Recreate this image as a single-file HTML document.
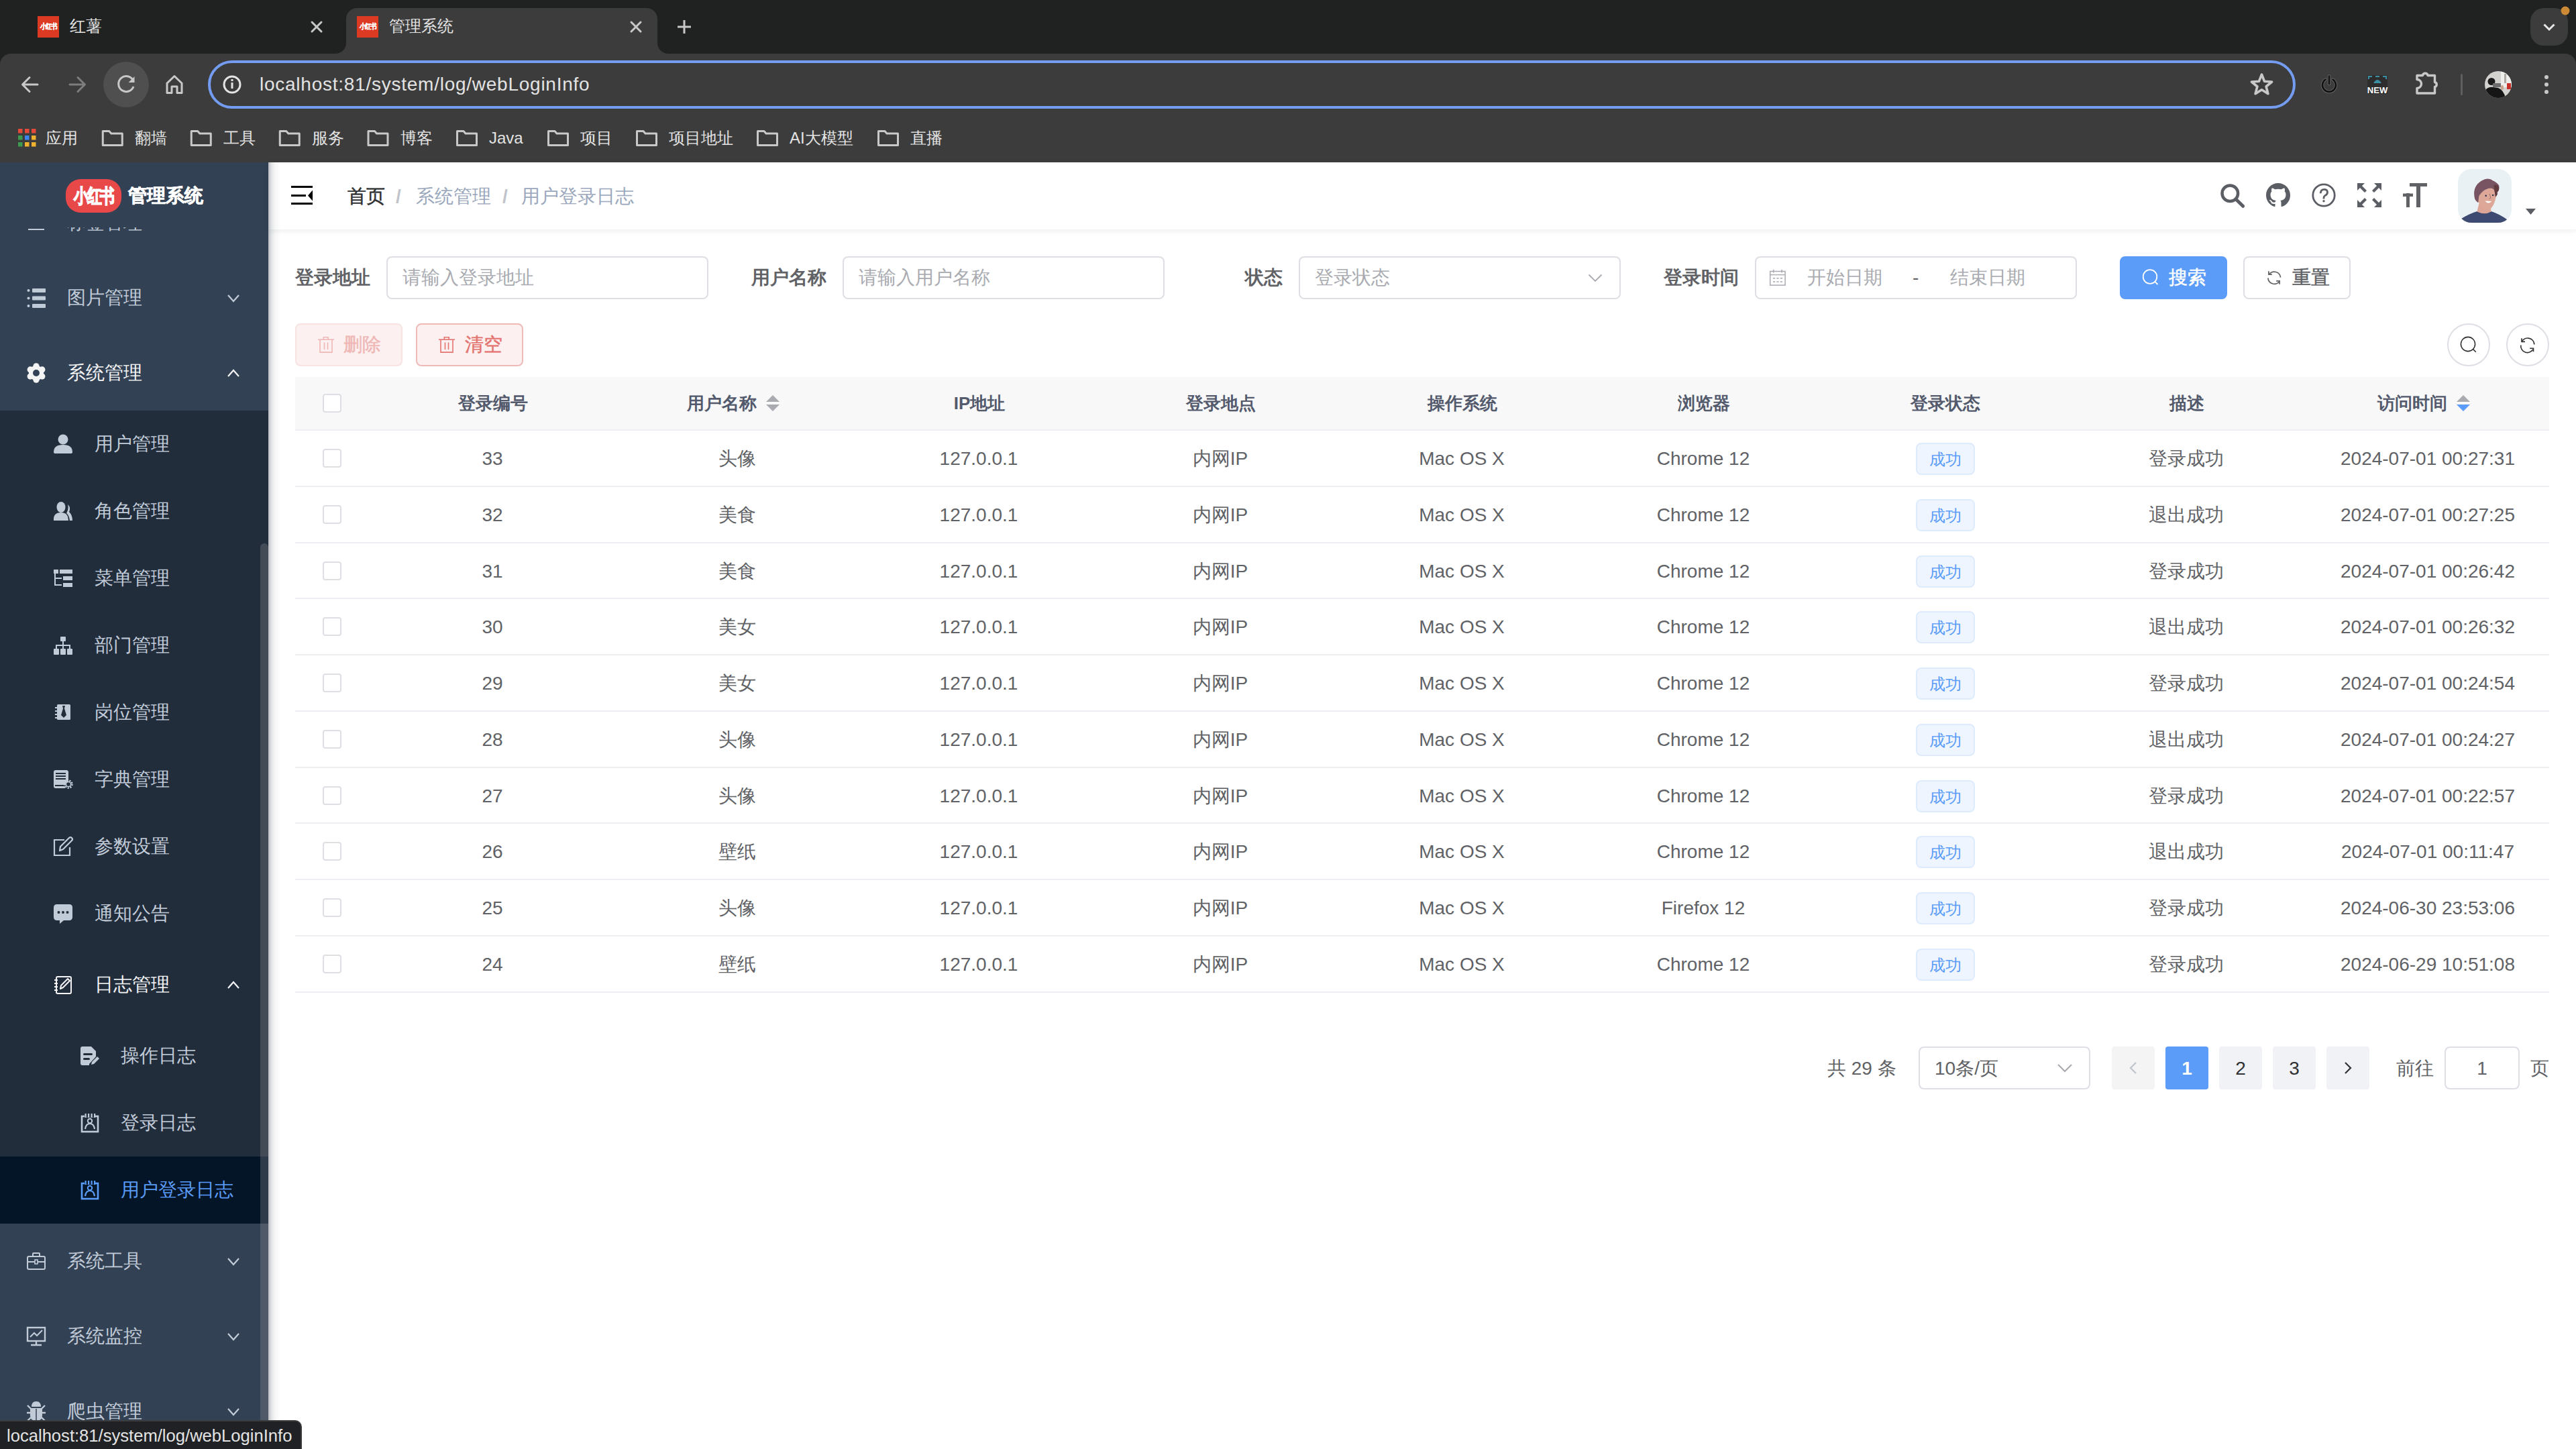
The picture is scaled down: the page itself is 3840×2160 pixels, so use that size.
<!DOCTYPE html><html><head><meta charset="utf-8"><style>
*{box-sizing:border-box}
html,body{margin:0;padding:0}
body{width:3840px;height:2160px;overflow:hidden;position:relative;background:#fff;font-family:"Liberation Sans",sans-serif;}
.a{position:absolute}
svg{display:block}
#tabstrip{left:0;top:0;width:3840px;height:120px;background:#202121}
#toolbar{left:0;top:80px;width:3840px;height:162px;background:#3c3c3c;border-radius:16px 16px 0 0}
.tabt{font-size:24px;color:#e3e3e3;line-height:28px;white-space:nowrap}
.bm{font-size:24px;color:#e3e3e3;line-height:28px;white-space:nowrap;top:192px}
#sidebar{left:0;top:242px;width:400px;height:1918px;background:#334154;overflow:hidden}
.mt{position:absolute;font-size:28px;line-height:32px;color:#c1cbd8;white-space:nowrap}
.lbl{position:absolute;font-size:28px;font-weight:700;color:#606266;line-height:32px;white-space:nowrap}
.inp{position:absolute;height:64px;border:2px solid #dddfe5;border-radius:8px;background:#fff}
.ph{position:absolute;font-size:28px;color:#a9abb1;line-height:32px;white-space:nowrap}
.th{position:absolute;font-size:26px;font-weight:700;color:#535a6c;line-height:32px;white-space:nowrap;text-align:center}
.td{position:absolute;font-size:28px;color:#606266;line-height:32px;white-space:nowrap;text-align:center}
.cb{position:absolute;width:28px;height:28px;border:2px solid #dddfe5;border-radius:4px;background:#fff}
.hl{position:absolute;left:440px;width:3360px;height:2px;background:#eceef4}
</style></head><body>
<div id="tabstrip" class="a"></div><div id="toolbar" class="a"></div>
<svg class="a" style="left:0;top:0" width="3840" height="242">
  <path d="M500 80 A16 16 0 0 0 516 64 L516 28 A16 16 0 0 1 532 12 L964 12 A16 16 0 0 1 980 28 L980 64 A16 16 0 0 0 996 80 Z" fill="#3c3c3c"/>
  <!-- favicons -->
  <rect x="56" y="24" width="32" height="32" fill="#dc3a22"/>
  <rect x="532" y="24" width="32" height="32" fill="#dc3a22"/>
  <!-- close x -->
  <path d="M465 33 L479 47 M479 33 L465 47" stroke="#c8c8c8" stroke-width="3" stroke-linecap="round"/>
  <path d="M941 33 L955 47 M955 33 L941 47" stroke="#c8c8c8" stroke-width="3" stroke-linecap="round"/>
  <!-- plus -->
  <path d="M1020 30 L1020 50 M1010 40 L1030 40" stroke="#c8c8c8" stroke-width="3"/>
  <!-- tab dropdown -->
  <rect x="3772" y="12" width="56" height="56" rx="20" fill="#3c3c3c"/>
  <path d="M3792.5 36.5 L3800 44 L3807.5 36.5" stroke="#e8e8e8" stroke-width="3" fill="none" stroke-linejoin="miter"/>
  <circle cx="3824" cy="16" r="6.5" fill="#cb8a33"/>
  <!-- back / fwd -->
  <path d="M56 126 L34 126 M44 115.5 L33.5 126 L44 136.5" stroke="#c8c8c8" stroke-width="3" fill="none" stroke-linecap="round" stroke-linejoin="round"/>
  <path d="M104 126 L126 126 M116 115.5 L126.5 126 L116 136.5" stroke="#7d7d7d" stroke-width="3" fill="none" stroke-linecap="round" stroke-linejoin="round"/>
  <circle cx="188" cy="126" r="34" fill="#4f4f4f"/>
  <path d="M198.5 120 A11.5 11.5 0 1 0 199 129" stroke="#c8c8c8" stroke-width="3" fill="none"/>
  <path d="M200.5 114 L200.5 123 L191.5 123 Z" fill="#c8c8c8"/>
  <!-- home -->
  <path d="M249 138.5 L249 124 L260 113.5 L271 124 L271 138.5 L264 138.5 L264 129 L256 129 L256 138.5 Z" stroke="#c8c8c8" stroke-width="3" fill="none" stroke-linejoin="round"/>
  <!-- url bar -->
  <rect x="312" y="92" width="3108" height="68" rx="34" fill="#3c3c3c" stroke="#749cf0" stroke-width="4"/>
  <circle cx="346" cy="126" r="12" stroke="#e3e3e3" stroke-width="3" fill="none"/>
  <rect x="344.5" y="123" width="3" height="9" fill="#e3e3e3"/>
  <rect x="344.5" y="118" width="3" height="3" fill="#e3e3e3"/>
  <!-- star -->
  <path d="M3371.5 111 L3375.6 121.3 L3386.6 122 L3378.1 129 L3380.9 139.7 L3371.5 133.8 L3362.1 139.7 L3364.9 129 L3356.4 122 L3367.4 121.3 Z" stroke="#c8c8c8" stroke-width="3.6" fill="none" stroke-linejoin="round"/>
  <!-- power -->
  <path d="M3466.5 118.5 A10 10 0 1 0 3477.5 118.5" stroke="#6a6a6a" stroke-width="4.4" fill="none" stroke-linecap="round"/>
  <path d="M3472 113.5 L3472 125" stroke="#6a6a6a" stroke-width="4.4" stroke-linecap="round"/>
  <path d="M3466.5 118.5 A10 10 0 1 0 3477.5 118.5" stroke="#111" stroke-width="2.6" fill="none" stroke-linecap="round"/>
  <path d="M3472 113.5 L3472 125" stroke="#111" stroke-width="2.6" stroke-linecap="round"/>
  <!-- NEW -->
  <rect x="3529" y="112" width="30" height="28" fill="#2d2d2d"/>
  <path d="M3531 118 L3531 114 L3536 114 M3541 114 L3547 114 M3552 114 L3557 114 L3557 118" stroke="#3a8fa3" stroke-width="2" fill="none"/>
  <path d="M3538 124 Q3544 114 3550 124 Z" fill="#3a8fa3"/>
  <text x="3544" y="139" font-family="Liberation Sans" font-weight="700" font-size="13" fill="#fff" text-anchor="middle">NEW</text>
  <!-- puzzle -->
  <path d="M3603 112.5 L3611.5 112.5 A3.8 3.8 0 0 1 3619 112.5 L3629.5 112.5 L3629.5 122.5 A3.6 3.6 0 0 1 3629.5 129.5 L3629.5 139 L3603 139 L3603 131.5 A6.5 6.5 0 0 0 3603 118.5 Z" stroke="#c8c8c8" stroke-width="3.4" fill="none" stroke-linejoin="round"/>
  <rect x="3668" y="110" width="3" height="32" rx="1.5" fill="#5f5f5f"/>
  <!-- profile -->
  <defs><clipPath id="pf"><circle cx="3724" cy="126" r="20"/></clipPath></defs>
  <g clip-path="url(#pf)">
  <rect x="3704" y="106" width="40" height="40" fill="#d4d2cf"/>
  <rect x="3728" y="106" width="16" height="24" fill="#eeeeec"/>
  <rect x="3733" y="110" width="3" height="14" fill="#b0aaa4"/>
  <path d="M3704 146 L3705 134 Q3710 129 3716 130 L3724 131 Q3732 134 3735 146 Z" fill="#151515"/>
  <circle cx="3714" cy="121.5" r="5.5" fill="#1b1b1b"/>
  <rect x="3716" y="124" width="12" height="6" rx="1" fill="#6e6e6e"/>
  <rect x="3728" y="127" width="4" height="7" rx="2" fill="#c9a58e"/>
  <rect x="3737" y="124" width="6" height="9" fill="#c8302a"/>
  </g>
  <!-- kebab -->
  <circle cx="3796" cy="115" r="3" fill="#c8c8c8"/>
  <circle cx="3796" cy="126" r="3" fill="#c8c8c8"/>
  <circle cx="3796" cy="137" r="3" fill="#c8c8c8"/>
  <!-- apps grid -->
  <g>
    <rect x="27" y="192" width="6.5" height="6.5" fill="#e5493a"/><rect x="37" y="192" width="6.5" height="6.5" fill="#e5493a"/><rect x="47" y="192" width="6.5" height="6.5" fill="#e5493a"/>
    <rect x="27" y="202" width="6.5" height="6.5" fill="#3c9b4f"/><rect x="37" y="202" width="6.5" height="6.5" fill="#3d85f0"/><rect x="47" y="202" width="6.5" height="6.5" fill="#f0b22e"/>
    <rect x="27" y="212" width="6.5" height="6.5" fill="#3c9b4f"/><rect x="37" y="212" width="6.5" height="6.5" fill="#f0b22e"/><rect x="47" y="212" width="6.5" height="6.5" fill="#f0b22e"/>
  </g>
</svg>
<div class="a tabt" style="left:56px;top:30px;font-size:10px;font-weight:700;color:#fff;width:32px;text-align:center;line-height:20px;letter-spacing:-1px;transform:scale(0.92,1.05);-webkit-text-stroke:0.3px #fff">小红书</div>
<div class="a tabt" style="left:532px;top:30px;font-size:10px;font-weight:700;color:#fff;width:32px;text-align:center;line-height:20px;letter-spacing:-1px;transform:scale(0.92,1.05);-webkit-text-stroke:0.3px #fff">小红书</div>
<div class="a tabt" style="left:104px;top:25px">红薯</div>
<div class="a tabt" style="left:580px;top:25px">管理系统</div>
<div class="a" style="left:387px;top:110px;font-size:28px;line-height:32px;color:#e3e3e3;letter-spacing:0.75px;white-space:nowrap">localhost:81/system/log/webLoginInfo</div>
<div class="a bm" style="left:68px">应用</div>
<svg class="a" style="left:0;top:0" width="1400" height="242"><path d="M153.25 216.5 L153.25 195.5 L162.75 195.5 L165.75 199 L182.25 199 L182.25 216.5 Z" stroke="#c8c8c8" stroke-width="3" fill="none" stroke-linejoin="round"/><path d="M285.25 216.5 L285.25 195.5 L294.75 195.5 L297.75 199 L314.25 199 L314.25 216.5 Z" stroke="#c8c8c8" stroke-width="3" fill="none" stroke-linejoin="round"/><path d="M417.25 216.5 L417.25 195.5 L426.75 195.5 L429.75 199 L446.25 199 L446.25 216.5 Z" stroke="#c8c8c8" stroke-width="3" fill="none" stroke-linejoin="round"/><path d="M549.0 216.5 L549.0 195.5 L558.5 195.5 L561.5 199 L578.0 199 L578.0 216.5 Z" stroke="#c8c8c8" stroke-width="3" fill="none" stroke-linejoin="round"/><path d="M681.5 216.5 L681.5 195.5 L691 195.5 L694 199 L710.5 199 L710.5 216.5 Z" stroke="#c8c8c8" stroke-width="3" fill="none" stroke-linejoin="round"/><path d="M817.5 216.5 L817.5 195.5 L827 195.5 L830 199 L846.5 199 L846.5 216.5 Z" stroke="#c8c8c8" stroke-width="3" fill="none" stroke-linejoin="round"/><path d="M949.5 216.5 L949.5 195.5 L959 195.5 L962 199 L978.5 199 L978.5 216.5 Z" stroke="#c8c8c8" stroke-width="3" fill="none" stroke-linejoin="round"/><path d="M1129.5 216.5 L1129.5 195.5 L1139 195.5 L1142 199 L1158.5 199 L1158.5 216.5 Z" stroke="#c8c8c8" stroke-width="3" fill="none" stroke-linejoin="round"/><path d="M1309.5 216.5 L1309.5 195.5 L1319 195.5 L1322 199 L1338.5 199 L1338.5 216.5 Z" stroke="#c8c8c8" stroke-width="3" fill="none" stroke-linejoin="round"/></svg><div class="a bm" style="left:200.75px">翻墙</div>
<div class="a bm" style="left:332.75px">工具</div>
<div class="a bm" style="left:464.75px">服务</div>
<div class="a bm" style="left:596.5px">博客</div>
<div class="a bm" style="left:729px">Java</div>
<div class="a bm" style="left:865px">项目</div>
<div class="a bm" style="left:997px">项目地址</div>
<div class="a bm" style="left:1177px">AI大模型</div>
<div class="a bm" style="left:1357px">直播</div>


<div id="sidebar" class="a">
<div class="a" style="left:0;top:370px;width:400px;height:1212px;background:#222d3c"></div>
<div class="a" style="left:0;top:1482px;width:400px;height:100px;background:#041527"></div>
<svg class="a" style="left:0;top:0" width="400" height="1918"><g transform="translate(0,-242)"><rect x="42" y="341" width="24" height="2" fill="#c1cbd8"/><rect x="40.5" y="431" width="4" height="4" rx="2" fill="#c1cbd8"/><rect x="48" y="430" width="20" height="6" rx="1" fill="#c1cbd8"/><rect x="40.5" y="442.5" width="4" height="4" rx="2" fill="#c1cbd8"/><rect x="48" y="441.5" width="20" height="6" rx="1" fill="#c1cbd8"/><rect x="40.5" y="454" width="4" height="4" rx="2" fill="#c1cbd8"/><rect x="48" y="453" width="20" height="6" rx="1" fill="#c1cbd8"/><path d="M340 440 L348 449 L356 440" stroke="#c1cbd8" stroke-width="2.2" fill="none"/><circle cx="54.00" cy="545.80" r="4.6" fill="#f4f4f5"/><circle cx="62.83" cy="550.90" r="4.6" fill="#f4f4f5"/><circle cx="62.83" cy="561.10" r="4.6" fill="#f4f4f5"/><circle cx="54.00" cy="566.20" r="4.6" fill="#f4f4f5"/><circle cx="45.17" cy="561.10" r="4.6" fill="#f4f4f5"/><circle cx="45.17" cy="550.90" r="4.6" fill="#f4f4f5"/><circle cx="54" cy="556" r="11" fill="#f4f4f5"/><circle cx="54" cy="556" r="5" fill="#334154"/><path d="M340 561 L348 552 L356 561" stroke="#f4f4f5" stroke-width="2.2" fill="none"/><circle cx="94" cy="655" r="7.5" fill="#c1cbd8"/><path d="M80 674 Q80 663 94 663 Q108 663 108 674 Q108 676 105 676 L83 676 Q80 676 80 674 Z" fill="#c1cbd8"/><ellipse cx="91" cy="756" rx="6.5" ry="8" fill="#c1cbd8"/><path d="M80 776 Q79 764 91 764 Q99 764 101 770 L102 776 Z" fill="#c1cbd8"/><path d="M101 752 Q106 756 103 763 Q108 768 108 776 L104 776 Q103 768 99 765 Q103 759 101 752 Z" fill="#c1cbd8"/><rect x="80" y="849" width="7" height="6" fill="#c1cbd8"/><rect x="89" y="849" width="19" height="6" fill="#c1cbd8"/><rect x="94" y="859" width="14" height="6" fill="#c1cbd8"/><rect x="94" y="869" width="14" height="6" fill="#c1cbd8"/><path d="M82 855 L82 872 L92 872 M82 862 L92 862" stroke="#c1cbd8" stroke-width="2" fill="none"/><rect x="90" y="949" width="8" height="7" rx="1" fill="#c1cbd8"/><path d="M94 956 L94 967 M84 967 L84 962 L104 962 L104 967" stroke="#c1cbd8" stroke-width="2" fill="none"/><rect x="80" y="967" width="8" height="9" rx="1" fill="#c1cbd8"/><rect x="90" y="967" width="8" height="9" rx="1" fill="#c1cbd8"/><rect x="100" y="967" width="8" height="9" rx="1" fill="#c1cbd8"/><rect x="85" y="1050" width="20" height="23" rx="1.5" fill="#c1cbd8"/><path d="M93 1052 L97 1052 L96 1056 L99 1066 L95 1070 L91 1066 L94 1056 Z" fill="#222d3c"/><rect x="82" y="1054" width="5" height="2" fill="#c1cbd8"/><rect x="82" y="1059" width="5" height="2" fill="#c1cbd8"/><rect x="82" y="1064" width="5" height="2" fill="#c1cbd8"/><rect x="82" y="1069" width="5" height="2" fill="#c1cbd8"/><path d="M80 1151 Q80 1148 83 1148 L100 1148 L102 1150 L102 1164 Q96 1168 97 1175 L83 1175 Q80 1175 80 1172 Z" fill="#c1cbd8"/><rect x="83" y="1152" width="15" height="2" fill="#222d3c"/><rect x="83" y="1156" width="15" height="2" fill="#222d3c"/><rect x="83" y="1160" width="15" height="2" fill="#222d3c"/><rect x="82" y="1170" width="15" height="2" fill="#222d3c"/><circle cx="102" cy="1169" r="5.5" stroke="#c1cbd8" stroke-width="2.6" fill="none" stroke-dasharray="2.2 1.6"/><circle cx="102" cy="1169" r="3.6" stroke="#c1cbd8" stroke-width="1.5" fill="none"/><path d="M96 1252 L81 1252 L81 1275 L104 1275 L104 1263" stroke="#c1cbd8" stroke-width="2.2" fill="none"/><path d="M89 1268 L90 1262 L103 1249 Q105 1247 107 1249 Q109 1251 107 1253 L94 1266 Z" stroke="#c1cbd8" stroke-width="2.2" fill="none" stroke-linejoin="round"/><path d="M80 1353 Q80 1348 85 1348 L103 1348 Q108 1348 108 1353 L108 1367 Q108 1372 103 1372 L95 1372 L89 1377 L89 1372 L85 1372 Q80 1372 80 1367 Z" fill="#c1cbd8"/><circle cx="87.5" cy="1360" r="2" fill="#222d3c"/><circle cx="94" cy="1360" r="2" fill="#222d3c"/><circle cx="100.5" cy="1360" r="2" fill="#222d3c"/><path d="M86 1456 L104 1456 Q106 1456 106 1458 L106 1479 Q106 1481 104 1481 L86 1481 Q84 1481 84 1479 L84 1458 Q84 1456 86 1456 Z" stroke="#f4f4f5" stroke-width="2" fill="none"/><rect x="81" y="1460" width="5" height="2" fill="#f4f4f5"/><rect x="81" y="1465" width="5" height="2" fill="#f4f4f5"/><rect x="81" y="1470" width="5" height="2" fill="#f4f4f5"/><rect x="81" y="1475" width="5" height="2" fill="#f4f4f5"/><path d="M90 1474 L91 1469 L101 1459 L104 1462 L94 1472 Z" stroke="#f4f4f5" stroke-width="2" fill="none" stroke-linejoin="round"/><path d="M340 1473 L348 1464 L356 1473" stroke="#f4f4f5" stroke-width="2.2" fill="none"/><path d="M123 1560 L136 1560 L143 1567 L143 1575 L133 1586 L133 1588 L123 1588 Q120 1588 120 1585 L120 1563 Q120 1560 123 1560 Z" fill="#c1cbd8"/><rect x="124" y="1570" width="14" height="3" rx="1.5" fill="#222d3c"/><rect x="124" y="1577" width="10" height="3" rx="1.5" fill="#222d3c"/><path d="M136 1587 L137 1583 L145 1575 L148 1578 L140 1586 Z" fill="#c1cbd8"/><rect x="122" y="1664" width="24" height="23" stroke="#c1cbd8" stroke-width="2.6" fill="none"/><rect x="126" y="1658" width="16" height="7" fill="#222d3c"/><rect x="126.5" y="1660" width="2.2" height="6" fill="#c1cbd8"/><rect x="131" y="1660" width="2.2" height="6" fill="#c1cbd8"/><rect x="135.5" y="1660" width="2.2" height="6" fill="#c1cbd8"/><rect x="140" y="1660" width="2.2" height="6" fill="#c1cbd8"/><circle cx="134" cy="1671" r="3.2" stroke="#c1cbd8" stroke-width="2" fill="none"/><path d="M127 1683 Q128 1675 134 1675 Q140 1675 141 1683" stroke="#c1cbd8" stroke-width="2.2" fill="none"/><rect x="122" y="1764" width="24" height="23" stroke="#5a9cf8" stroke-width="2.6" fill="none"/><rect x="126" y="1758" width="16" height="7" fill="#041527"/><rect x="126.5" y="1760" width="2.2" height="6" fill="#5a9cf8"/><rect x="131" y="1760" width="2.2" height="6" fill="#5a9cf8"/><rect x="135.5" y="1760" width="2.2" height="6" fill="#5a9cf8"/><rect x="140" y="1760" width="2.2" height="6" fill="#5a9cf8"/><circle cx="134" cy="1771" r="3.2" stroke="#5a9cf8" stroke-width="2" fill="none"/><path d="M127 1783 Q128 1775 134 1775 Q140 1775 141 1783" stroke="#5a9cf8" stroke-width="2.2" fill="none"/><rect x="41" y="1873" width="26" height="19" rx="2" stroke="#c1cbd8" stroke-width="2" fill="none"/><path d="M49 1873 L49 1869 Q49 1868 50 1868 L58 1868 Q59 1868 59 1869 L59 1873" stroke="#c1cbd8" stroke-width="2" fill="none"/><path d="M41 1881 L67 1881" stroke="#c1cbd8" stroke-width="2"/><rect x="52" y="1878" width="4" height="6" stroke="#c1cbd8" stroke-width="1.6" fill="#334154"/><path d="M340 1876 L348 1885 L356 1876" stroke="#c1cbd8" stroke-width="2.2" fill="none"/><rect x="41" y="1979" width="26" height="20" stroke="#c1cbd8" stroke-width="2.4" fill="none"/><path d="M45 1993 L51 1987 L55 1991 L63 1983" stroke="#c1cbd8" stroke-width="2" fill="none"/><path d="M54 1999 L54 2005 M46 2005 L62 2005" stroke="#c1cbd8" stroke-width="2.4" fill="none"/><path d="M340 1988 L348 1997 L356 1988" stroke="#c1cbd8" stroke-width="2.2" fill="none"/><path d="M47 2097 Q47 2089 54 2089 Q61 2089 61 2097 Z" fill="#c1cbd8"/><path d="M45 2099 L63 2099 L63 2110 Q63 2118 54 2118 Q45 2118 45 2110 Z" fill="#c1cbd8"/><path d="M54 2100 L54 2117" stroke="#334154" stroke-width="1.5"/><path d="M41 2095 L46 2100 M67 2095 L62 2100 M40 2106 L45 2106 M68 2106 L63 2106 M41 2118 L46 2113 M67 2118 L62 2113" stroke="#c1cbd8" stroke-width="2.4"/><path d="M340 2100 L348 2109 L356 2100" stroke="#c1cbd8" stroke-width="2.2" fill="none"/></g></svg>
<div class="mt" style="left:100px;top:74px;color:#c1cbd8">标签管理</div><div class="mt" style="left:100px;top:186px;color:#c1cbd8">图片管理</div><div class="mt" style="left:100px;top:298px;color:#f4f4f5">系统管理</div><div class="mt" style="left:141px;top:404px;color:#c1cbd8">用户管理</div><div class="mt" style="left:141px;top:504px;color:#c1cbd8">角色管理</div><div class="mt" style="left:141px;top:604px;color:#c1cbd8">菜单管理</div><div class="mt" style="left:141px;top:704px;color:#c1cbd8">部门管理</div><div class="mt" style="left:141px;top:804px;color:#c1cbd8">岗位管理</div><div class="mt" style="left:141px;top:904px;color:#c1cbd8">字典管理</div><div class="mt" style="left:141px;top:1004px;color:#c1cbd8">参数设置</div><div class="mt" style="left:141px;top:1104px;color:#c1cbd8">通知公告</div><div class="mt" style="left:141px;top:1210px;color:#f4f4f5">日志管理</div><div class="mt" style="left:180px;top:1316px;color:#c1cbd8">操作日志</div><div class="mt" style="left:180px;top:1416px;color:#c1cbd8">登录日志</div><div class="mt" style="left:180px;top:1516px;color:#5a9cf8">用户登录日志</div><div class="mt" style="left:100px;top:1622px;color:#c1cbd8">系统工具</div><div class="mt" style="left:100px;top:1734px;color:#c1cbd8">系统监控</div><div class="mt" style="left:100px;top:1846px;color:#c1cbd8">爬虫管理</div>
<div class="a" style="left:0;top:0;width:400px;height:97px;background:#334154"></div>
<div class="a" style="left:98px;top:25px;width:83px;height:50px;border-radius:22px;background:#e84848"></div>
<div class="a" style="left:98px;top:33px;width:83px;height:34px;text-align:center;color:#fff;font-size:24px;font-weight:700;line-height:34px;letter-spacing:-2px;transform:scale(0.9,1.2);-webkit-text-stroke:1.2px #fff">小红书</div>
<div class="a" style="left:191px;top:34px;font-size:28px;font-weight:700;color:#fff;line-height:32px;white-space:nowrap;-webkit-text-stroke:0.6px #fff">管理系统</div>
<div class="a" style="left:388px;top:568px;width:12px;height:1400px;border-radius:6px;background:rgba(145,147,152,0.3)"></div>
</div>
<div class="a" style="left:400px;top:242px;width:3440px;height:100px;background:#fff;box-shadow:0 2px 8px rgba(4,21,39,0.08)"></div>
<div class="a" style="left:400px;top:242px;width:18px;height:1918px;background:linear-gradient(to right,rgba(4,21,39,0.28),rgba(4,21,39,0.12) 25%,rgba(4,21,39,0.04) 55%,rgba(4,21,39,0))"></div>
<svg class="a" style="left:0;top:0" width="3840" height="400"><rect x="434" y="277" width="32" height="3" fill="#000"/><rect x="434" y="290" width="22" height="3" fill="#000"/><rect x="434" y="302" width="32" height="3" fill="#000"/><path d="M466 283.5 L459 291.5 L466 299.5 Z" fill="#000"/><circle cx="3324.3" cy="288.3" r="11.8" stroke="#5b5e65" stroke-width="4.5" fill="none"/><path d="M3333.3 297.3 L3343.6 307.3" stroke="#5b5e65" stroke-width="5" stroke-linecap="round"/><path transform="translate(3378,273) scale(2.25)" d="M8 0C3.58 0 0 3.58 0 8c0 3.540 2.290 6.530 5.470 7.590.4.070.55-.170.55-.380 0-.190-.010-.820-.010-1.490-2.010.370-2.530-.490-2.690-.940-.090-.230-.480-.940-.820-1.130-.280-.150-.680-.520-.010-.530.630-.010 1.080.580 1.230.820.720 1.210 1.870.870 2.330.660.070-.520.280-.870.510-1.070-1.780-.2-3.640-.890-3.640-3.950 0-.870.310-1.590.820-2.150-.080-.2-.360-1.020.080-2.120 0 0 .670-.210 2.200.820.640-.180 1.320-.270 2-.270.680 0 1.360.090 2 .270 1.530-1.040 2.200-.820 2.200-.820.440 1.100.160 1.920.080 2.120.510.560.820 1.270.820 2.150 0 3.070-1.870 3.750-3.650 3.950.290.250.540.730.540 1.480 0 1.070-.010 1.930-.010 2.200 0 .210.150.460.550.380A8.013 8.013 0 0016 8c0-4.420-3.580-8-8-8z" fill="#5b5e65"/><circle cx="3464" cy="291" r="16.2" stroke="#5b5e65" stroke-width="2.8" fill="none"/><path d="M3459.2 288.3 Q3459.5 282.3 3464.5 282.3 Q3469.5 282.3 3469.5 286.5 Q3469.5 289.8 3465.8 291.6 Q3464 292.6 3464 295 L3464 296.6" stroke="#5b5e65" stroke-width="2.8" fill="none"/><circle cx="3464" cy="299.7" r="1.7" fill="#5b5e65"/><path d="M3514 273 L3525 273 L3521 277 L3528 284 L3525 287 L3518 280 L3514 284 Z" fill="#5b5e65"/><path d="M3550 273 L3539 273 L3543 277 L3536 284 L3539 287 L3546 280 L3550 284 Z" fill="#5b5e65"/><path d="M3514 309 L3525 309 L3521 305 L3528 298 L3525 295 L3518 302 L3514 298 Z" fill="#5b5e65"/><path d="M3550 309 L3539 309 L3543 305 L3536 298 L3539 295 L3546 302 L3550 298 Z" fill="#5b5e65"/><rect x="3592" y="273" width="26" height="5" fill="#606266"/><rect x="3602" y="273" width="6" height="36" fill="#606266"/><rect x="3582" y="288.5" width="15" height="4.5" fill="#606266"/><rect x="3587" y="288" width="5" height="21" fill="#606266"/><path d="M3765 311 L3780 311 L3772.5 320 Z" fill="#5b5e65"/></svg>
<svg class="a" style="left:3664px;top:252px" width="80" height="80" viewBox="0 0 80 80">
<defs><clipPath id="av"><rect width="80" height="80" rx="20"/></clipPath></defs>
<g clip-path="url(#av)">
<rect width="80" height="80" fill="#eaf1f4"/>
<path d="M5 74 Q16 67 28.5 63 Q40 68.5 49.5 63 Q62 67 73.5 75.5 L76 82 L3 82 Z" fill="#3e4a71"/>
<path d="M28.5 63.5 L32 49 L49 58 L49.5 63.5 Q40 69 28.5 63.5 Z" fill="#dca595"/>
<path d="M31 38 Q31 52 36 56 Q43 61 48 59.8 Q53 56 56 45 Q58 40 55.5 34 L53 26 Q42 28 31 38 Z" fill="#dea898"/>
<path d="M25.5 40 Q26 38.5 31 39 L32 50.5 Q26.5 48 25.5 40 Z" fill="#d4977e"/>
<path d="M24.5 41 Q22 25 36 17 Q46 12 52.5 17.5 Q57 19 61 24 Q63 31 58.5 34.5 Q60 38 56 41 L54.5 32 Q52 27 45 29 Q36 32 31.5 40 L30 50 Q25 47 24.5 41 Z" fill="#785462"/>
<path d="M53.5 24 Q58 22.5 60.5 26 Q62.5 31 58.5 34.5 Q59.5 38.5 56 41.5 L54.5 32.5 Z" fill="#613a3f"/>
<circle cx="41.7" cy="39.8" r="1.2" fill="#202a48"/><circle cx="52.2" cy="38.9" r="1.2" fill="#202a48"/>
<path d="M42 48.2 Q45.5 51.5 48.8 48.6 Z" fill="#fff" stroke="#fff" stroke-width="1.2"/>
<path d="M47 37 L49 43 L46.5 44.5" stroke="#734c4b" stroke-width="0.6" fill="none"/>
</g></svg>
<div class="a" style="left:518px;top:276.5px;font-size:28px;line-height:32px;color:#303133;white-space:nowrap;-webkit-text-stroke:0.5px #303133">首页</div>
<div class="a" style="left:590px;top:276.5px;font-size:28px;font-weight:700;line-height:32px;color:#c1c4cb;white-space:nowrap">/</div>
<div class="a" style="left:620px;top:276.5px;font-size:28px;line-height:32px;color:#9aa7bc;white-space:nowrap">系统管理</div>
<div class="a" style="left:749px;top:276.5px;font-size:28px;font-weight:700;line-height:32px;color:#c1c4cb;white-space:nowrap">/</div>
<div class="a" style="left:777px;top:276.5px;font-size:28px;line-height:32px;color:#9aa7bc;white-space:nowrap">用户登录日志</div>
<div class="lbl" style="left:440px;top:398px;width:112px;text-align:right">登录地址</div>
<div class="inp" style="left:576px;top:382px;width:480px"></div>
<div class="ph" style="left:600px;top:398px">请输入登录地址</div>
<div class="lbl" style="left:1120px;top:398px;width:112px;text-align:right">用户名称</div>
<div class="inp" style="left:1256px;top:382px;width:480px"></div>
<div class="ph" style="left:1280px;top:398px">请输入用户名称</div>
<div class="lbl" style="left:1856px;top:398px;width:56px;text-align:right">状态</div>
<div class="inp" style="left:1936px;top:382px;width:480px"></div>
<div class="ph" style="left:1960px;top:398px">登录状态</div>
<div class="lbl" style="left:2480px;top:398px;width:112px;text-align:right">登录时间</div>
<div class="inp" style="left:2616px;top:382px;width:480px"></div>
<div class="ph" style="left:2694px;top:398px">开始日期</div>
<div class="ph" style="left:2851px;top:398px;color:#606266">-</div>
<div class="ph" style="left:2907px;top:398px">结束日期</div>
<svg class="a" style="left:0;top:0" width="3840" height="700"><path d="M2368.5 409.5 L2378 419 L2387.5 409.5" stroke="#a9abb1" stroke-width="1.8" fill="none"/><rect x="2638.7" y="404.5" width="22.4" height="20.6" stroke="#a9abb1" stroke-width="1.5" fill="none"/><path d="M2638.7 409.6 L2661.1 409.6" stroke="#a9abb1" stroke-width="1.4"/><path d="M2643.7 402 L2643.7 406.6 M2656.1 402 L2656.1 406.6" stroke="#a9abb1" stroke-width="1.6"/><rect x="2643.0" y="414.0" width="3.2" height="1.6" fill="#a9abb1"/><rect x="2648.4" y="414.0" width="3.2" height="1.6" fill="#a9abb1"/><rect x="2653.8" y="414.0" width="3.2" height="1.6" fill="#a9abb1"/><rect x="2643.0" y="419.2" width="3.2" height="1.6" fill="#a9abb1"/><rect x="2648.4" y="419.2" width="3.2" height="1.6" fill="#a9abb1"/><rect x="2653.8" y="419.2" width="3.2" height="1.6" fill="#a9abb1"/></svg>
<div class="a" style="left:3160px;top:382px;width:160px;height:64px;border-radius:8px;background:#5a9cf8"></div>
<svg class="a" style="left:3190px;top:398px" width="32" height="32"><circle cx="15" cy="14.5" r="10.3" stroke="#fff" stroke-width="1.8" fill="none"/><path d="M22.3 21.8 L26.5 26" stroke="#fff" stroke-width="1.8"/></svg>
<div class="a" style="left:3233px;top:398px;font-size:28px;line-height:32px;color:#fff;white-space:nowrap;-webkit-text-stroke:0.5px #fff">搜索</div>
<div class="a" style="left:3344px;top:382px;width:160px;height:64px;border-radius:8px;border:2px solid #dddfe5;background:#fff"></div>
<svg class="a" style="left:0;top:0" width="3840" height="700"><g stroke="#606266" stroke-width="1.7" fill="none"><path d="M3382.8 408.6 A9.5 9.5 0 0 1 3399.6 413.6"/><path d="M3381.9 404.2 L3381.9 409.2 L3386.8 409.2"/><path d="M3380.9 414.4 A9.5 9.5 0 0 0 3397.4 420.2"/><path d="M3393.2 418.8 L3398.1 418.8 L3398.1 423.7"/></g></svg>
<div class="a" style="left:3417px;top:398px;font-size:28px;line-height:32px;color:#606266;white-space:nowrap;-webkit-text-stroke:0.5px #606266">重置</div>
<div class="a" style="left:440px;top:482px;width:160px;height:64px;border-radius:8px;border:2px solid #f8e3e3;background:#fcf0f0"></div>
<svg class="a" style="left:0;top:0" width="800" height="600"><g transform="translate(-180,0)" stroke="#efb8b6" stroke-width="1.6" fill="none"><path d="M654 506.2 L678 506.2"/><path d="M662.3 506 L662.3 502.8 L669.2 502.8 L669.2 506"/><path d="M657 506 L657 525.1 L675 525.1 L675 506"/><path d="M663.5 511 L663.5 520.5 M668.5 511 L668.5 520.5" stroke-linecap="round"/></g></svg>
<div class="a" style="left:512px;top:498px;font-size:28px;line-height:32px;color:#efb8b6;white-space:nowrap;-webkit-text-stroke:0.5px #efb8b6">删除</div>
<div class="a" style="left:620px;top:482px;width:160px;height:64px;border-radius:8px;border:2px solid #f0b9b7;background:#fcf0f0"></div>
<svg class="a" style="left:0;top:0" width="800" height="600"><g transform="translate(0,0)" stroke="#e47470" stroke-width="1.6" fill="none"><path d="M654 506.2 L678 506.2"/><path d="M662.3 506 L662.3 502.8 L669.2 502.8 L669.2 506"/><path d="M657 506 L657 525.1 L675 525.1 L675 506"/><path d="M663.5 511 L663.5 520.5 M668.5 511 L668.5 520.5" stroke-linecap="round"/></g></svg>
<div class="a" style="left:693px;top:498px;font-size:28px;line-height:32px;color:#e47470;white-space:nowrap;-webkit-text-stroke:0.5px #e47470">清空</div>
<div class="a" style="left:3648px;top:482px;width:64px;height:64px;border-radius:32px;border:2px solid #dddfe5;background:#fff"></div>
<svg class="a" style="left:3664px;top:498px" width="32" height="32"><circle cx="15" cy="15" r="10.6" stroke="#303133" stroke-width="1.6" fill="none"/><path d="M22.6 22.6 L26.8 26.8" stroke="#303133" stroke-width="1.6"/></svg>
<div class="a" style="left:3736px;top:482px;width:64px;height:64px;border-radius:32px;border:2px solid #dddfe5;background:#fff"></div>
<svg class="a" style="left:0;top:0" width="3840" height="700"><g stroke="#303133" stroke-width="1.6" fill="none"><path d="M3759.5 509 A9.8 9.8 0 0 1 3777.8 513.6"/><path d="M3759 504.2 L3759 509.4 L3764 509.4"/><path d="M3757.8 514.5 A9.8 9.8 0 0 0 3775.8 521"/><path d="M3771.2 519.3 L3776.5 519.3 L3776.5 524.3"/></g></svg>
<div class="a" style="left:440px;top:562px;width:3360px;height:78px;background:#f8f8f9"></div>
<div class="hl" style="top:640px"></div>
<div class="cb" style="left:481px;top:587px"></div>
<div class="th" style="left:550px;top:585px;width:370px">登录编号</div>
<div class="th" style="left:1024.0px;top:585px;width:104px">用户名称</div>
<div class="th" style="left:1280px;top:585px;width:360px">IP地址</div>
<div class="th" style="left:1640px;top:585px;width:360px">登录地点</div>
<div class="th" style="left:2000px;top:585px;width:360px">操作系统</div>
<div class="th" style="left:2360px;top:585px;width:360px">浏览器</div>
<div class="th" style="left:2720px;top:585px;width:360px">登录状态</div>
<div class="th" style="left:3080px;top:585px;width:360px">描述</div>
<div class="th" style="left:3544.0px;top:585px;width:104px">访问时间</div>
<svg class="a" style="left:1141px;top:588px" width="22" height="26"><path d="M1 11 L11 1 L21 11 Z" fill="#a9abb1"/><path d="M1 15 L11 25 L21 15 Z" fill="#a9abb1"/></svg>
<svg class="a" style="left:3661px;top:588px" width="22" height="26"><path d="M1 11 L11 1 L21 11 Z" fill="#a9abb1"/><path d="M1 15 L11 25 L21 15 Z" fill="#5a9cf8"/></svg>
<div class="hl" style="top:724px"></div>
<div class="cb" style="left:481px;top:669px"></div>
<div class="td" style="left:549px;top:668.0px;width:370px">33</div>
<div class="td" style="left:919px;top:668.0px;width:360px">头像</div>
<div class="td" style="left:1279px;top:668.0px;width:360px">127.0.0.1</div>
<div class="td" style="left:1639px;top:668.0px;width:360px">内网IP</div>
<div class="td" style="left:1999px;top:668.0px;width:360px">Mac OS X</div>
<div class="td" style="left:2359px;top:668.0px;width:360px">Chrome 12</div>
<div class="a" style="left:2856px;top:660.0px;width:88px;height:48px;border:2px solid #ddebfd;border-radius:8px;background:#eef5fe"></div>
<div class="a" style="left:2856px;top:669.0px;width:88px;text-align:center;font-size:24px;line-height:32px;color:#5a9cf8">成功</div>
<div class="td" style="left:3079px;top:668.0px;width:360px">登录成功</div>
<div class="td" style="left:3439px;top:668.0px;width:360px">2024-07-01 00:27:31</div>
<div class="hl" style="top:808px"></div>
<div class="cb" style="left:481px;top:753px"></div>
<div class="td" style="left:549px;top:752.0px;width:370px">32</div>
<div class="td" style="left:919px;top:752.0px;width:360px">美食</div>
<div class="td" style="left:1279px;top:752.0px;width:360px">127.0.0.1</div>
<div class="td" style="left:1639px;top:752.0px;width:360px">内网IP</div>
<div class="td" style="left:1999px;top:752.0px;width:360px">Mac OS X</div>
<div class="td" style="left:2359px;top:752.0px;width:360px">Chrome 12</div>
<div class="a" style="left:2856px;top:744.0px;width:88px;height:48px;border:2px solid #ddebfd;border-radius:8px;background:#eef5fe"></div>
<div class="a" style="left:2856px;top:753.0px;width:88px;text-align:center;font-size:24px;line-height:32px;color:#5a9cf8">成功</div>
<div class="td" style="left:3079px;top:752.0px;width:360px">退出成功</div>
<div class="td" style="left:3439px;top:752.0px;width:360px">2024-07-01 00:27:25</div>
<div class="hl" style="top:891px"></div>
<div class="cb" style="left:481px;top:837px"></div>
<div class="td" style="left:549px;top:835.5px;width:370px">31</div>
<div class="td" style="left:919px;top:835.5px;width:360px">美食</div>
<div class="td" style="left:1279px;top:835.5px;width:360px">127.0.0.1</div>
<div class="td" style="left:1639px;top:835.5px;width:360px">内网IP</div>
<div class="td" style="left:1999px;top:835.5px;width:360px">Mac OS X</div>
<div class="td" style="left:2359px;top:835.5px;width:360px">Chrome 12</div>
<div class="a" style="left:2856px;top:827.5px;width:88px;height:48px;border:2px solid #ddebfd;border-radius:8px;background:#eef5fe"></div>
<div class="a" style="left:2856px;top:836.5px;width:88px;text-align:center;font-size:24px;line-height:32px;color:#5a9cf8">成功</div>
<div class="td" style="left:3079px;top:835.5px;width:360px">登录成功</div>
<div class="td" style="left:3439px;top:835.5px;width:360px">2024-07-01 00:26:42</div>
<div class="hl" style="top:975px"></div>
<div class="cb" style="left:481px;top:920px"></div>
<div class="td" style="left:549px;top:919.0px;width:370px">30</div>
<div class="td" style="left:919px;top:919.0px;width:360px">美女</div>
<div class="td" style="left:1279px;top:919.0px;width:360px">127.0.0.1</div>
<div class="td" style="left:1639px;top:919.0px;width:360px">内网IP</div>
<div class="td" style="left:1999px;top:919.0px;width:360px">Mac OS X</div>
<div class="td" style="left:2359px;top:919.0px;width:360px">Chrome 12</div>
<div class="a" style="left:2856px;top:911.0px;width:88px;height:48px;border:2px solid #ddebfd;border-radius:8px;background:#eef5fe"></div>
<div class="a" style="left:2856px;top:920.0px;width:88px;text-align:center;font-size:24px;line-height:32px;color:#5a9cf8">成功</div>
<div class="td" style="left:3079px;top:919.0px;width:360px">退出成功</div>
<div class="td" style="left:3439px;top:919.0px;width:360px">2024-07-01 00:26:32</div>
<div class="hl" style="top:1059px"></div>
<div class="cb" style="left:481px;top:1004px"></div>
<div class="td" style="left:549px;top:1003.0px;width:370px">29</div>
<div class="td" style="left:919px;top:1003.0px;width:360px">美女</div>
<div class="td" style="left:1279px;top:1003.0px;width:360px">127.0.0.1</div>
<div class="td" style="left:1639px;top:1003.0px;width:360px">内网IP</div>
<div class="td" style="left:1999px;top:1003.0px;width:360px">Mac OS X</div>
<div class="td" style="left:2359px;top:1003.0px;width:360px">Chrome 12</div>
<div class="a" style="left:2856px;top:995.0px;width:88px;height:48px;border:2px solid #ddebfd;border-radius:8px;background:#eef5fe"></div>
<div class="a" style="left:2856px;top:1004.0px;width:88px;text-align:center;font-size:24px;line-height:32px;color:#5a9cf8">成功</div>
<div class="td" style="left:3079px;top:1003.0px;width:360px">登录成功</div>
<div class="td" style="left:3439px;top:1003.0px;width:360px">2024-07-01 00:24:54</div>
<div class="hl" style="top:1143px"></div>
<div class="cb" style="left:481px;top:1088px"></div>
<div class="td" style="left:549px;top:1087.0px;width:370px">28</div>
<div class="td" style="left:919px;top:1087.0px;width:360px">头像</div>
<div class="td" style="left:1279px;top:1087.0px;width:360px">127.0.0.1</div>
<div class="td" style="left:1639px;top:1087.0px;width:360px">内网IP</div>
<div class="td" style="left:1999px;top:1087.0px;width:360px">Mac OS X</div>
<div class="td" style="left:2359px;top:1087.0px;width:360px">Chrome 12</div>
<div class="a" style="left:2856px;top:1079.0px;width:88px;height:48px;border:2px solid #ddebfd;border-radius:8px;background:#eef5fe"></div>
<div class="a" style="left:2856px;top:1088.0px;width:88px;text-align:center;font-size:24px;line-height:32px;color:#5a9cf8">成功</div>
<div class="td" style="left:3079px;top:1087.0px;width:360px">退出成功</div>
<div class="td" style="left:3439px;top:1087.0px;width:360px">2024-07-01 00:24:27</div>
<div class="hl" style="top:1226px"></div>
<div class="cb" style="left:481px;top:1172px"></div>
<div class="td" style="left:549px;top:1170.5px;width:370px">27</div>
<div class="td" style="left:919px;top:1170.5px;width:360px">头像</div>
<div class="td" style="left:1279px;top:1170.5px;width:360px">127.0.0.1</div>
<div class="td" style="left:1639px;top:1170.5px;width:360px">内网IP</div>
<div class="td" style="left:1999px;top:1170.5px;width:360px">Mac OS X</div>
<div class="td" style="left:2359px;top:1170.5px;width:360px">Chrome 12</div>
<div class="a" style="left:2856px;top:1162.5px;width:88px;height:48px;border:2px solid #ddebfd;border-radius:8px;background:#eef5fe"></div>
<div class="a" style="left:2856px;top:1171.5px;width:88px;text-align:center;font-size:24px;line-height:32px;color:#5a9cf8">成功</div>
<div class="td" style="left:3079px;top:1170.5px;width:360px">登录成功</div>
<div class="td" style="left:3439px;top:1170.5px;width:360px">2024-07-01 00:22:57</div>
<div class="hl" style="top:1310px"></div>
<div class="cb" style="left:481px;top:1255px"></div>
<div class="td" style="left:549px;top:1254.0px;width:370px">26</div>
<div class="td" style="left:919px;top:1254.0px;width:360px">壁纸</div>
<div class="td" style="left:1279px;top:1254.0px;width:360px">127.0.0.1</div>
<div class="td" style="left:1639px;top:1254.0px;width:360px">内网IP</div>
<div class="td" style="left:1999px;top:1254.0px;width:360px">Mac OS X</div>
<div class="td" style="left:2359px;top:1254.0px;width:360px">Chrome 12</div>
<div class="a" style="left:2856px;top:1246.0px;width:88px;height:48px;border:2px solid #ddebfd;border-radius:8px;background:#eef5fe"></div>
<div class="a" style="left:2856px;top:1255.0px;width:88px;text-align:center;font-size:24px;line-height:32px;color:#5a9cf8">成功</div>
<div class="td" style="left:3079px;top:1254.0px;width:360px">退出成功</div>
<div class="td" style="left:3439px;top:1254.0px;width:360px">2024-07-01 00:11:47</div>
<div class="hl" style="top:1394px"></div>
<div class="cb" style="left:481px;top:1339px"></div>
<div class="td" style="left:549px;top:1338.0px;width:370px">25</div>
<div class="td" style="left:919px;top:1338.0px;width:360px">头像</div>
<div class="td" style="left:1279px;top:1338.0px;width:360px">127.0.0.1</div>
<div class="td" style="left:1639px;top:1338.0px;width:360px">内网IP</div>
<div class="td" style="left:1999px;top:1338.0px;width:360px">Mac OS X</div>
<div class="td" style="left:2359px;top:1338.0px;width:360px">Firefox 12</div>
<div class="a" style="left:2856px;top:1330.0px;width:88px;height:48px;border:2px solid #ddebfd;border-radius:8px;background:#eef5fe"></div>
<div class="a" style="left:2856px;top:1339.0px;width:88px;text-align:center;font-size:24px;line-height:32px;color:#5a9cf8">成功</div>
<div class="td" style="left:3079px;top:1338.0px;width:360px">登录成功</div>
<div class="td" style="left:3439px;top:1338.0px;width:360px">2024-06-30 23:53:06</div>
<div class="hl" style="top:1478px"></div>
<div class="cb" style="left:481px;top:1423px"></div>
<div class="td" style="left:549px;top:1422.0px;width:370px">24</div>
<div class="td" style="left:919px;top:1422.0px;width:360px">壁纸</div>
<div class="td" style="left:1279px;top:1422.0px;width:360px">127.0.0.1</div>
<div class="td" style="left:1639px;top:1422.0px;width:360px">内网IP</div>
<div class="td" style="left:1999px;top:1422.0px;width:360px">Mac OS X</div>
<div class="td" style="left:2359px;top:1422.0px;width:360px">Chrome 12</div>
<div class="a" style="left:2856px;top:1414.0px;width:88px;height:48px;border:2px solid #ddebfd;border-radius:8px;background:#eef5fe"></div>
<div class="a" style="left:2856px;top:1423.0px;width:88px;text-align:center;font-size:24px;line-height:32px;color:#5a9cf8">成功</div>
<div class="td" style="left:3079px;top:1422.0px;width:360px">登录成功</div>
<div class="td" style="left:3439px;top:1422.0px;width:360px">2024-06-29 10:51:08</div>
<div class="a" style="left:2724px;top:1577px;font-size:28px;line-height:32px;color:#606266;white-space:nowrap">共 29 条</div>
<div class="inp" style="left:2860px;top:1560px;width:256px"></div>
<div class="a" style="left:2884px;top:1577px;font-size:28px;line-height:32px;color:#606266;white-space:nowrap">10条/页</div>
<div class="a" style="left:3148px;top:1560px;width:64px;height:64px;border-radius:4px;background:#f4f4f5"></div>
<div class="a" style="left:3228px;top:1560px;width:64px;height:64px;border-radius:4px;background:#5a9cf8"></div>
<div class="a" style="left:3228px;top:1577px;width:64px;text-align:center;font-size:28px;font-weight:700;line-height:32px;color:#fff">1</div>
<div class="a" style="left:3308px;top:1560px;width:64px;height:64px;border-radius:4px;background:#f0f2f5"></div>
<div class="a" style="left:3308px;top:1577px;width:64px;text-align:center;font-size:28px;line-height:32px;color:#303133">2</div>
<div class="a" style="left:3388px;top:1560px;width:64px;height:64px;border-radius:4px;background:#f0f2f5"></div>
<div class="a" style="left:3388px;top:1577px;width:64px;text-align:center;font-size:28px;line-height:32px;color:#303133">3</div>
<div class="a" style="left:3468px;top:1560px;width:64px;height:64px;border-radius:4px;background:#f0f2f5"></div>
<div class="a" style="left:3572px;top:1577px;font-size:28px;line-height:32px;color:#606266;white-space:nowrap">前往</div>
<div class="inp" style="left:3644px;top:1560px;width:112px"></div>
<div class="a" style="left:3644px;top:1577px;width:112px;text-align:center;font-size:28px;line-height:32px;color:#606266">1</div>
<div class="a" style="left:3772px;top:1577px;font-size:28px;line-height:32px;color:#606266;white-space:nowrap">页</div>
<svg class="a" style="left:0;top:0" width="3840" height="1700"><path d="M3068 1587 L3078 1597 L3088 1587" stroke="#a9abb1" stroke-width="2.2" fill="none"/><path d="M3184 1584 L3176 1592 L3184 1600" stroke="#c1c4cb" stroke-width="2.2" fill="none"/><path d="M3496 1584 L3504 1592 L3496 1600" stroke="#303133" stroke-width="2.2" fill="none"/></svg>
<div class="a" style="left:-2px;top:2117px;width:452px;height:50px;background:#202124;border:2px solid #3c3c3c;border-radius:0 10px 0 0"></div>
<div class="a" style="left:10px;top:2124px;font-size:25.6px;line-height:32px;color:#e3e3e3;white-space:nowrap">localhost:81/system/log/webLoginInfo</div>
</body></html>
